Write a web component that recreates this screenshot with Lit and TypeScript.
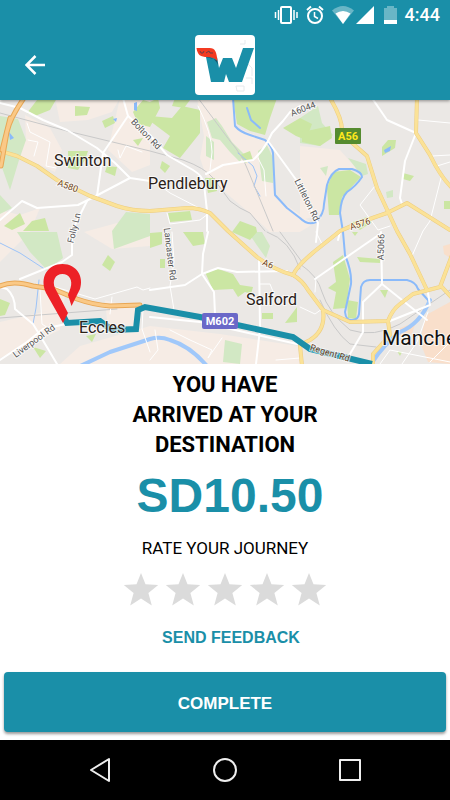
import { LitElement, html, svg, css } from "lit";
import { customElement, state } from "lit/decorators.js";

const PINK = [
  "M25 115 50 128 62 150 55 172 18 155 26 140Z",
  "M0 210 20 215 40 208 30 232 0 262Z",
  "M55 98 120 98 112 112 88 120 60 122Z",
  "M120 98 150 98 150 165 132 172 108 150Z",
  "M197 98 235 98 236 127 268 141 274 196 313 224 300 232 270 232 246 210 206 176 200 158 204 136Z",
  "M300 146 340 150 356 168 335 170 326 186 322 215 300 220Z",
  "M84 232 150 214 150 246 112 249Z",
  "M0 322 60 308 60 330 0 358Z",
  "M105 300 136 308 134 330 108 330Z",
  "M80 346 150 326 220 334 298 346 300 364 60 364Z",
  "M40 288 66 292 62 310 42 312Z",
];

const PEACH = [
  "M426 315 450 302 450 364 428 362 420 342Z",
  "M443 246 450 244 450 258 444 254Z",
  "M400 328 416 322 412 334 400 336Z",
];

const PALE_GREEN = [
  "M0 116 18 119 26 140 19 160 10 190 0 162Z",
  "M112 231 126 212 150 214 150 236 114 249Z",
  "M0 195 12 208 0 214Z",
  "M17 232 57 232 63 258 47 270 30 252Z",
  "M258 151 267 145 273 158 273 183 262 181Z",
  "M207 122 216 118 222 126 232 142 244 154 240 162 230 152 220 140 212 138Z",
  "M206 136 214 142 214 160 206 156Z",
  "M238 103 256 110 268 122 258 124 244 118Z",
  "M300 118 318 106 322 123 333 135 320 146 300 143Z",
  "M225 340 242 344 240 364 223 362Z",
  "M320 168 328 166 326 176Z",
  "M348 158 366 164 368 174 362 176Z",
  "M386 192 393 190 393 197 387 198Z",
  "M248 232 262 232 270 246 266 258 256 244Z",
];

const GREEN = [
  "M37 100 57 98 50 110 35 116 27 113Z",
  "M75 106 90 107 87 115 75 116Z",
  "M102 121 113 116 115 123 105 128Z",
  "M133 112 143 100 150 102 158 98 160 108 150 127 138 124Z",
  "M68 151 88 151 85 160 78 170 68 168Z",
  "M107 166 117 167 115 176 105 172Z",
  "M133 140 143 138 138 146Z",
  "M20 213 25 224 12 230 4 226Z",
  "M32 221 45 218 49 231 23 231Z",
  "M0 299 10 303 5 315 0 316Z",
  "M108 255 115 262 110 271 102 265Z",
  "M33 347 46 351 40 358Z",
  "M86 336 96 334 92 342Z",
  "M150 116 172 118 182 106 200 110 200 133 180 158 163 148 170 136 150 121Z",
  "M175 98 190 100 184 108 172 106Z",
  "M233 98 277 98 270 118 265 135 250 131 237 124Z",
  "M240 155 250 151 253 160 245 163Z",
  "M283 128 300 118 312 124 306 140 296 136Z",
  "M205 178 215 178 217 191 208 193Z",
  "M168 213 190 211 192 220 170 222Z",
  "M162 161 170 166 165 173 160 168Z",
  "M240 221 256 227 257 232 250 240 232 232Z",
  "M302 132 330 126 332 138 320 146 302 142Z",
  "M382 147 388 140 396 140 395 148 382 156Z",
  "M403 173 414 176 410 181 403 179Z",
  "M327 188 333 172 350 170 361 177 342 197 339 215 329 215Z",
  "M444 201 450 201 450 209 444 209Z",
  "M350 223 367 217 372 222 360 230Z",
  "M333 262 343 255 350 279 346 308 333 309 336 292 328 288 336 282Z",
  "M347 300 358 302 356 319 348 318Z",
  "M357 257 380 259 380 263 360 262Z",
  "M380 290 388 290 385 298Z",
  "M352 232 358 232 355 236Z",
  "M205 272 218 269 233 274 240 285 253 287 251 294 245 292 238 297 233 289 213 290Z",
  "M285 323 297 307 297 322Z",
  "M262 313 273 313 273 319 262 319Z",
  "M183 232 203 232 205 244 193 246Z",
  "M150 233 162 232 162 244 150 248Z",
  "M160 259 165 259 165 268 160 268Z",
  "M397 351 402 352 400 356Z",
];

const RAIL = [
  "M0 113 67 131 150 151 183 160Q205 168 213 178L230 201Q240 209 250 213L265 231",
  "M198 98 230 141Q242 155 247 168L273 231",
  "M300 264Q318 276 322 292Q328 312 350 330Q374 338 400 324L450 290",
  "M320 300Q334 332 350 344L376 347",
  "M0 318 117 309",
  "M267 232Q290 240 300 269",
  "M280 232 302 262",
];

const WHITE_THIN = [
  "M27 123 30 132 50 142 46 166 56 168",
  "M28 140 38 142 34 156",
  "M150 178 170 193 203 210",
  "M198 106Q212 134 212 152L210 170",
  "M118 150 120 158 126 146 142 152",
  "M167 213 170 224 200 220 208 214",
  "M441 178 430 221 423 231 412 256",
  "M375 186 360 205 378 230 390 226",
  "M437 166 450 162",
  "M432 156 450 155",
  "M418 120 450 123",
  "M55 287 95 299 137 287 143 290 150 288",
  "M40 290 42 324 48 328",
  "M112 297 110 314",
  "M143 309 142 329 150 352",
  "M172 232 174 262 170 286 174 310",
  "M300 307 315 314 322 309",
  "M315 292 316 279",
  "M428 312 417 342 402 364",
  "M380 364 390 350 410 354 450 362",
  "M430 362 448 344",
  "M155 330 158 350 150 360",
  "M170 330 190 340 212 350 208 358 222 338",
  "M260 284 270 284 274 294 268 304",
  "M258 158 264 170 266 196",
  "M276 360 300 358",
  "M316 232 322 244",
];

const WHITE = [
  "M0 103 20 108 43 120 67 130 97 148 115 163 130 178 150 181",
  "M123 98 128 116 103 153 97 196",
  "M128 116 150 135 167 155 193 170Q203 176 204 184L207 211 207 231",
  "M206 174 223 165 253 160Q262 152 268 141L272 133 283 121 290 112 300 106",
  "M268 141 297 181 318 223 316 242",
  "M130 178 92 198 78 205 37 208 22 201 0 220",
  "M87 201 72 231 72 255 62 262 20 279",
  "M372 98 387 120 416 133 405 161 400 198 402 204",
  "M381 232 382 284 363 302 363 332 350 354",
  "M382 284 427 320",
  "M380 234 315 279",
  "M390 321 430 305 428 293",
  "M208 232 203 254 202 274 185 285 150 290",
  "M202 274 218 268 237 272 287 271",
  "M202 274 214 292 215 314",
  "M259 257 260 329 256 364",
  "M150 317 200 322 297 344",
  "M0 287 7 289Q15 296 15 309L33 324Q44 342 57 364",
  "M0 360 27 342 43 329 66 324",
  "M340 232 338 240",
];

const WATER = [
  "M233 98 235 126Q240 132 250 135L265 140Q272 146 273 153L275 195 287 208 300 218Q308 226 316 222Q324 214 324 204L327 185Q331 172 339 169L352 169Q362 172 362 177Q356 186 347 192Q341 198 340 213L343 232 345 255Q352 272 351 284L345 312Q346 321 352 320Q358 320 359 314L361 287Q363 280 370 280L407 280Q416 282 418 289L428 300",
  "M247 108 251 120 260 128",
];

const WATER_THIN = [
  "M238 153 253 166 257 176 254 186 260 196",
  "M0 243 20 253 46 270",
  "M39 280 36 308 33 324",
];

const WATER_WIDE = [
  "M76 368 110 352 150 339Q160 336 170 340Q190 346 207 366",
  "M430 300Q420 324 400 332Q382 346 370 366",
];

const PONDS = [
  "M134 103 137 102 137 111 134 110Z",
  "M113 119 117 118 116 122Z",
  "M384 150 391 146 390 151 385 153Z",
  "M9 132 14 138 10 140Z",
];

const YELLOW = [
  "M0 151 17 156 37 166 57 180 90 196 117 206Q132 211 150 211L187 208Q200 208 210 213L228 231 257 257Q274 270 293 275Q302 280 308 290L323 310 350 322 388 321Q392 310 400 304L413 294 440 287 452 255",
  "M293 275Q298 264 320 247L340 231Q360 222 387 213L407 203 450 230",
  "M330 98Q342 118 342 130L350 141 367 156 377 188 397 231 410 254 427 290",
  "M417 98 416 133 430 155Q440 176 452 188",
  "M323 310Q326 330 310 340L300 345 302 366",
  "M388 321 390 335 373 354 373 366",
  "M441 286 452 298",
];

const ORANGE = [
  "M24 98Q10 118 7 132L1 166",
  "M10 118 2 150",
  "M0 286Q13 280 33 286L53 289 77 299Q94 305 110 306L140 305",
];

const ROUTE = "M64 317 67 323 100 321 112 330 136 329 138 310 145 307 200 317 293 337 310 349 372 364";

const strokes = (paths: string[], cls: string) =>
  paths.map((d) => svg`<path class="line ${cls}" d=${d} />`);
const fills = (paths: string[], cls: string) =>
  paths.map((d) => svg`<path class=${cls} d=${d} />`);

@customElement("journey-map")
class JourneyMap extends LitElement {
  static styles = css`
    :host { display: block; }
    .map { display: block; width: 100%; aspect-ratio: 450 / 264; background: #ebe8e5; }
    .line { fill: none; stroke-linejoin: round; stroke-linecap: round; }
    .pink { fill: #f6ece5; }
    .peach { fill: #f9dfcb; }
    .pale { fill: #d2e8c4; }
    .green { fill: #cbe6a3; }
    .pond { fill: #8abafa; }
    .rail { stroke: #c9c9c9; stroke-width: 1; }
    .thin { stroke: #fff; stroke-width: 1; }
    .road { stroke: #fff; stroke-width: 2; }
    .water { stroke: #8abafa; stroke-width: 2; }
    .stream { stroke: #9cc3f8; stroke-width: 1; }
    .wide { stroke: #a0c8fa; stroke-width: 4; }
    .yellow-edge { stroke: #edcd80; stroke-width: 4; }
    .yellow { stroke: #fbe297; stroke-width: 3; }
    .orange-edge { stroke: #e8a755; stroke-width: 5; }
    .orange { stroke: #fac987; stroke-width: 3; }
    .route { stroke: #1a8fa8; stroke-width: 6; stroke-linejoin: miter; stroke-linecap: butt; }
    .pin { fill: #ed2127; }
    .town, .street {
      font-family: Roboto, "Liberation Sans", sans-serif;
      paint-order: stroke;
      stroke: rgba(255, 255, 255, 0.7);
      stroke-width: 2px;
    }
    .town { font-size: 16px; fill: #2b2118; }
    .city { font-size: 21px; fill: #111; }
    .street { font-size: 9px; fill: #555; text-anchor: middle; }
    .brown { fill: #6b4226; }
    .shield-green { fill: #558b2f; }
    .shield-purple { fill: #6a68c8; }
    .shield-text { font: 700 11px Roboto, "Liberation Sans", sans-serif; text-anchor: middle; fill: #fff; }
    .gold { fill: #ffe81c; }
  `;

  private street(x: number, y: number, angle: number, name: string, extra = "") {
    return svg`<text class="street ${extra}" transform="translate(${x} ${y}) rotate(${angle})" dy="3">${name}</text>`;
  }

  render() {
    return html`
      <svg class="map" viewBox="0 100 450 264" preserveAspectRatio="xMidYMid slice" role="img" aria-label="Route map to Eccles">
        ${fills(PINK, "pink")} ${fills(PEACH, "peach")} ${fills(PALE_GREEN, "pale")} ${fills(GREEN, "green")}
        ${fills(PONDS, "pond")}
        ${strokes(WATER_WIDE, "wide")} ${strokes(WATER, "water")} ${strokes(WATER_THIN, "stream")}
        ${strokes(RAIL, "rail")} ${strokes(WHITE_THIN, "thin")} ${strokes(WHITE, "road")}
        ${strokes(YELLOW, "yellow-edge")} ${strokes(YELLOW, "yellow")}
        ${strokes(ORANGE, "orange-edge")} ${strokes(ORANGE, "orange")}
        <path class="line route" d=${ROUTE} />
        <path class="pin" d="M63 323 46 293C39 277 48 264 62.500 264C77 264 84 277 80 289L71.500 306 68 295 70.500 288C73 280 69 274 62.500 274C55 274 52 281 55 288L68 313Z" />
        ${this.street(146, 134, 46, "Bolton Rd")}
        ${this.street(68, 186, 20, "A580", "brown")}
        ${this.street(74, 228, -76, "Folly Ln")}
        ${this.street(170, 254, 83, "Lancaster Rd")}
        ${this.street(34, 341, -36, "Liverpool Rd")}
        ${this.street(303, 109, -21, "A6044")}
        ${this.street(307, 200, 64, "Littleton Rd")}
        ${this.street(360, 224, -18, "A576", "brown")}
        ${this.street(381, 247, -88, "A5066")}
        ${this.street(268, 264, 22, "A6", "brown")}
        ${this.street(330, 353, 17, "Regent Rd", "brown")}
        <text class="town" x="54" y="166">Swinton</text>
        <text class="town" x="148" y="189">Pendlebury</text>
        <text class="town" x="79" y="333">Eccles</text>
        <text class="town" x="246" y="305">Salford</text>
        <text class="town city" x="382" y="345">Manche</text>
        <rect class="shield-green" x="335" y="128" width="26" height="16" rx="1" />
        <text class="shield-text gold" x="348" y="140">A56</text>
        <rect class="shield-purple" x="202" y="313" width="36" height="16" rx="2" />
        <text class="shield-text" x="220" y="325">M602</text>
      </svg>
    `;
  }
}

@customElement("star-rating")
class StarRating extends LitElement {
  @state() private value = 0;

  static styles = css`
    :host { display: block; }
    .stars { display: flex; gap: 6px; margin: 0; padding: 0; border: 0; }
    .star { position: relative; display: block; width: 36px; height: 36px; color: #dbdbdb; cursor: pointer; }
    .star.on { color: #1a8fa8; }
    .star input { position: absolute; inset: 0; width: 100%; height: 100%; margin: 0; opacity: 0; cursor: pointer; }
    .shape { display: block; width: 36px; height: 36px; fill: currentColor; }
  `;

  render() {
    return html`
      <fieldset class="stars" aria-label="Rate your journey">
        ${[1, 2, 3, 4, 5].map(
          (n) => html`
            <label class="star ${n <= this.value ? "on" : ""}">
              <input type="radio" name="rating" .value=${String(n)} aria-label="${n} of 5"
                .checked=${n === this.value} @change=${() => (this.value = n)} />
              <svg class="shape" viewBox="0 0 36 36" aria-hidden="true">
                <path d="M18 1 22.500 12.200 35.200 13 25.400 21 28.800 33.500 18 26.600 7.200 33.500 10.600 21 .8 13 13.500 12.200Z" />
              </svg>
            </label>
          `
        )}
      </fieldset>
    `;
  }
}

@customElement("app-root")
class AppRoot extends LitElement {
  static styles = css`
    :host {
      display: flex;
      flex-direction: column;
      min-height: 100vh;
      background: #fff;
      color: #000;
      font-family: Roboto, "Liberation Sans", sans-serif;
    }
    button { font-family: inherit; border: 0; padding: 0; background: none; cursor: pointer; }
    svg { display: block; }
    .top { position: relative; z-index: 1; background: #1a8fa8; box-shadow: 0 1px 3px rgba(0, 0, 0, 0.4); }
    .status { display: flex; justify-content: flex-end; align-items: center; gap: 5px; height: 30px; padding-right: 10px; color: #fff; }
    .status svg { fill: none; }
    .time { font-size: 18px; font-weight: 500; line-height: 30px; }
    .bar { display: grid; grid-template-columns: 1fr 60px 1fr; align-items: center; height: 70px; }
    .back { width: 40px; height: 40px; margin-left: 15px; display: grid; place-items: center; }
    .logo { width: 60px; height: 60px; border-radius: 4px; background: #fff; }
    .content { flex: 1; display: flex; flex-direction: column; align-items: center; padding: 6px 4px 8px; }
    .title { width: 192px; margin: 0; font-size: 22px; font-weight: 700; line-height: 30px; text-align: center; }
    .price { margin: 8px 0 0 10px; font: 700 48px/56px "Liberation Sans", sans-serif; color: #1a8fa8; }
    .prompt { margin: 12px 0; font-size: 17px; line-height: 24px; }
    .feedback { margin: 18px 0 0 12px; font: 700 16px/24px "Liberation Sans", sans-serif; color: #1a8fa8; }
    .complete {
      align-self: stretch;
      height: 60px;
      margin-top: auto;
      padding-top: 4px;
      border-radius: 4px;
      background: #1a8fa8;
      box-shadow: 0 2px 3px rgba(0, 0, 0, 0.4);
      font: 700 17px/24px "Liberation Sans", sans-serif;
      color: #fff;
    }
    .nav { display: flex; justify-content: center; gap: 85px; height: 60px; background: #000; }
    .key { width: 40px; display: grid; place-items: center; }
    .key svg { fill: none; stroke: #eee; stroke-width: 2; stroke-linejoin: round; }
  `;

  render() {
    return html`
      <header class="top">
        <div class="status">
          <svg width="128" height="24" viewBox="272 3 128 24" aria-hidden="true">
            <rect x="281" y="7" width="10" height="16" rx="1" stroke="#fff" stroke-width="2" />
            <path d="M278.500 10v10M275.500 12v6M294 10v10M297 12v6" stroke="#fff" stroke-width="1.500" />
            <circle cx="315" cy="16" r="7" stroke="#fff" stroke-width="2" />
            <path d="M314.500 12v4.500l3.500 2" stroke="#fff" stroke-width="1.500" />
            <path d="M307 10l4-3.500M323 10l-4-3.500" stroke="#fff" stroke-width="2" />
            <path d="M332 10.500Q343 1.500 354 10.500L343 24Z" fill="#fff" opacity=".35" />
            <path d="M335.500 13.500Q343 8.500 350.500 13.500L343 24Z" fill="#fff" />
            <path d="M374 6v18h-18Z" fill="#fff" />
            <path d="M384 8h3V6h7v2h3v12h-13Z" fill="#fff" opacity=".35" />
            <path d="M384 20h13v4h-13Z" fill="#fff" />
          </svg>
          <span class="time">4:44</span>
        </div>
        <div class="bar">
          <button class="back" aria-label="Back">
            <svg width="20" height="20" viewBox="0 0 20 20" fill="none" stroke="#fff" stroke-width="2.500" aria-hidden="true">
              <path d="M20 10H2M10.500 1 1.500 10l9 9" />
            </svg>
          </button>
          <svg class="logo" viewBox="195 35 60 60" role="img" aria-label="W">
            <path d="M240 44h5v-4M246 62l6 6v8M236 86h8v5h-7zM246 78h6v6" fill="none" stroke="#e6e9ec" stroke-width="1" />
            <path d="M206 57h11l2 11 4-10h9l4 10 7-20h11l-12 34h-13l-3-8-2 8h-13Z" fill="#1a8fa8" />
            <path d="M206 57q8-1 12 8l-1-5Z" fill="#1b5468" />
            <path d="M196.500 48h13c6 0 7 4 8 13-3-3-6-4-10-4-7 0-10-2-11-9Z" fill="#f33a21" />
            <path d="M200 51l1 2h2l1-2M206 53l3-2 1 2h3" fill="none" stroke="#6b3f48" stroke-width="1" />
          </svg>
        </div>
      </header>
      <journey-map></journey-map>
      <main class="content">
        <h1 class="title">YOU HAVE ARRIVED AT YOUR DESTINATION</h1>
        <p class="price">SD10.50</p>
        <p class="prompt">RATE YOUR JOURNEY</p>
        <star-rating></star-rating>
        <button class="feedback">SEND FEEDBACK</button>
        <button class="complete">COMPLETE</button>
      </main>
      <nav class="nav" aria-label="System navigation">
        <button class="key" aria-label="Back">
          <svg width="24" height="26" viewBox="0 0 24 26"><path d="M21 2v22L3 13Z" /></svg>
        </button>
        <button class="key" aria-label="Home">
          <svg width="26" height="26" viewBox="0 0 26 26"><circle cx="13" cy="13" r="11" /></svg>
        </button>
        <button class="key" aria-label="Recent apps">
          <svg width="24" height="24" viewBox="0 0 24 24"><rect x="2" y="2" width="20" height="20" /></svg>
        </button>
      </nav>
    `;
  }
}
